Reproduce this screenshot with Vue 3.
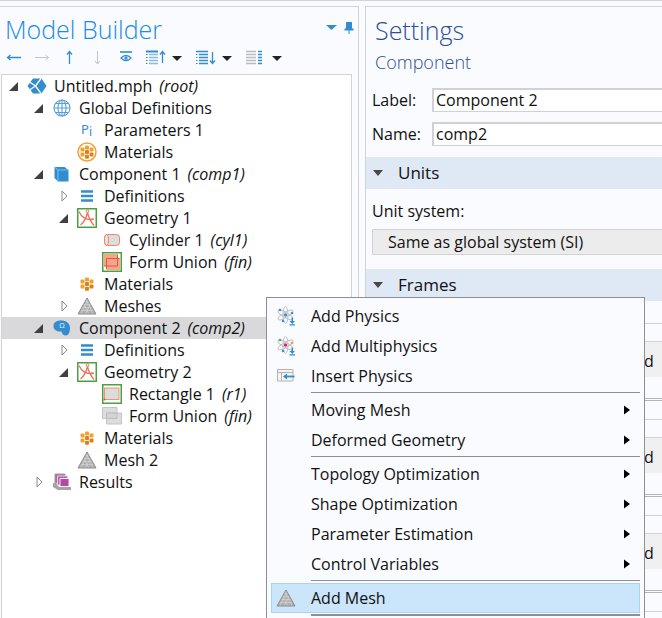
<script setup>
import { ref } from 'vue'

const tree = [
  { text: 'Untitled.mph', tag: 'root', depth: 0, icon: 'root', open: true },
  { text: 'Global Definitions', depth: 1, icon: 'globe', open: true },
  { text: 'Parameters 1', depth: 2, icon: 'pi' },
  { text: 'Materials', depth: 2, icon: 'materialsRing' },
  { text: 'Component 1', tag: 'comp1', depth: 1, icon: 'cube', open: true },
  { text: 'Definitions', depth: 2, icon: 'defs', open: false },
  { text: 'Geometry 1', depth: 2, icon: 'geometry', open: true },
  { text: 'Cylinder 1', tag: 'cyl1', depth: 3, icon: 'cylinder' },
  { text: 'Form Union', tag: 'fin', depth: 3, icon: 'union' },
  { text: 'Materials', depth: 2, icon: 'materials' },
  { text: 'Meshes', depth: 2, icon: 'mesh', open: false },
  { text: 'Component 2', tag: 'comp2', depth: 1, icon: 'blob', open: true, selected: true },
  { text: 'Definitions', depth: 2, icon: 'defs', open: false },
  { text: 'Geometry 2', depth: 2, icon: 'geometry', open: true },
  { text: 'Rectangle 1', tag: 'r1', depth: 3, icon: 'rectangle' },
  { text: 'Form Union', tag: 'fin', depth: 3, icon: 'unionGrey' },
  { text: 'Materials', depth: 2, icon: 'materials' },
  { text: 'Mesh 2', depth: 2, icon: 'mesh' },
  { text: 'Results', depth: 1, icon: 'results', open: false },
]

const menu = [
  [
    { text: 'Add Physics', icon: 'physics' },
    { text: 'Add Multiphysics', icon: 'multiphysics' },
    { text: 'Insert Physics', icon: 'insert' },
  ],
  [
    { text: 'Moving Mesh', sub: true },
    { text: 'Deformed Geometry', sub: true },
  ],
  [
    { text: 'Topology Optimization', sub: true },
    { text: 'Shape Optimization', sub: true },
    { text: 'Parameter Estimation', sub: true },
    { text: 'Control Variables', sub: true },
  ],
  [{ text: 'Add Mesh', icon: 'mesh', active: true }],
]

const atom = (core, a, b) => `
  <g fill="none" stroke="#c2c2c4"><ellipse cx="9.500" cy="9" rx="2.500" ry="8.500"/><ellipse cx="9.500" cy="9" rx="2.500" ry="8.500" transform="rotate(60 9.500 9)"/><ellipse cx="9.500" cy="9" rx="2.500" ry="8.500" transform="rotate(120 9.500 9)"/></g>
  <circle cx="9.500" cy="9" r="1.700" fill="${core}"/><circle cx="4" cy="4" r="1.300" fill="${a}"/><circle cx="16" cy="7" r="1.300" fill="${b}"/><circle cx="7" cy="15" r="1.300" fill="#3a92d2"/>
  <path d="M15.500 11.500h1.500v3.500h2l-2.750 3-2.750-3h2zM13.500 18.300h5.500v1.200h-5.500z" fill="#2f8dd0"/>`

const cells = `
  <g fill="#f0a030"><rect x="8" y="3.500" width="4" height="4" rx="1"/><rect x="3.500" y="5.500" width="4" height="4" rx="1"/><rect x="12.500" y="5.500" width="4" height="4" rx="1"/><rect x="3.500" y="10.500" width="4" height="4" rx="1"/></g>
  <g fill="#d98218"><rect x="8" y="8" width="4" height="4" rx="1"/><rect x="12.500" y="10.500" width="4" height="4" rx="1"/><rect x="8" y="12.700" width="4" height="4" rx="1"/></g>`

const icons = {
  root: '<path d="M0.500 10L6 2.500h8.500l5 7.500-5 7.500H6z" fill="#338ccc"/><path d="M2.500 6l6 4-6 4M8.500 10l5.500-7.500M8.500 10l5.500 7.500" stroke="#fafbff" stroke-width="1.300" fill="none"/>',
  globe: '<g fill="none" stroke="#5aa0d8" stroke-width="1.100"><circle cx="10" cy="10" r="8"/><ellipse cx="10" cy="10" rx="4" ry="8"/><path d="M10 2v16M2 10h16M3.500 5.500h13M3.500 14.500h13"/></g>',
  pi: '<text x="4" y="14" font-family="Noto Sans, sans-serif" font-size="13" fill="#338ccc">P</text><text x="12" y="15.500" font-family="Noto Sans, sans-serif" font-size="12" fill="#338ccc">i</text>',
  materialsRing: '<circle cx="10" cy="10" r="9" fill="#fff" stroke="#efa23c" stroke-width="1.500"/>' + cells,
  materials: cells,
  cube: '<path d="M2.500 3h10l4 3v11.500H6L2.500 14z" fill="#2f8dd0"/><path d="M2.500 3L6 6h10.500M6 6v11.500" fill="none" stroke="#8cc4ea" stroke-width="0.900"/>',
  defs: '<path d="M4 5.500h12M4 10h12M4 14.500h12" stroke="#338ccc" stroke-width="2.600"/>',
  geometry: '<rect x="0.750" y="0.750" width="18.500" height="18.500" fill="#fff" stroke="#48a23f" stroke-width="1.500"/><path d="M10.500 4.500C9.500 9 7 14 3.500 17M10.500 4.500c1 4.500 3 9 6.500 13M2 3.500c2 5 7 9.500 15 7.500" fill="none" stroke="#ec7357" stroke-width="1.300"/><circle cx="10.500" cy="3.200" r="1.300" fill="#fff" stroke="#ec7357"/>',
  cylinder: '<rect x="2.500" y="4.500" width="15" height="11" rx="3" fill="#dcdcdc" stroke="#ee8468"/><ellipse cx="4.500" cy="10" rx="2" ry="5.500" fill="#e8e8e8" stroke="#ee8468"/>',
  union: '<rect x="0.750" y="0.750" width="18.500" height="18.500" fill="#fff" stroke="#48a23f" stroke-width="1.500"/><path d="M1.500 2h14v4h2.500v12H4.500v-4h-3z" fill="#f5a58c"/><path d="M2 14h13.500V2.500M4.500 17V6.500h13" fill="none" stroke="#e0573a"/>',
  unionGrey: '<path d="M0.500 1.500h14.500v11H0.500z" fill="#dcdcdc" stroke="#c4c4c4"/><path d="M4.500 7h15v11h-15z" fill="#dcdcdc" stroke="#c4c4c4"/><path d="M4.500 7H15v5.500H4.500z" fill="#d2d2d2" stroke="#bdbdbd"/>',
  rectangle: '<rect x="0.750" y="0.750" width="18.500" height="18.500" fill="#fff" stroke="#48a23f" stroke-width="1.500"/><rect x="2.500" y="4" width="14.500" height="11.500" fill="#dcdcdc" stroke="#f0927a"/><circle cx="2.500" cy="15.500" r="1" fill="#e0573a"/>',
  mesh: '<path d="M10 2L19 18H1z" fill="#b0b0b0" stroke="#8c8c8c"/><path d="M8.500 5.500h3M7 8.500h6M5.500 11.500h9M4 14.500h12M10 3.500v2l-1.500 3-1.500 3-1.500 3-1.500 3M10 5.500l1.500 3 1.500 3 1.500 3 1.500 3M7 8.500l3 6 1.500 3M13 8.500l-3 6-1.500 3" fill="none" stroke="#d6d6d6" stroke-width="0.600"/>',
  blob: '<path d="M1.500 8c0-4 3.500-5.500 7.500-5.500 5 0 9 2.500 9 7.500 0 4-1.500 7.500-4 7.500s-4-1.500-4.500-4C6 14 1.500 12.500 1.500 8z" fill="#338ccc"/><text x="7.500" y="10" font-family="Noto Sans, sans-serif" font-size="7" fill="#e6f2fb">Ω</text>',
  results: '<path d="M1 11h3l3 4h12v3H6l-5-3z" fill="#a4a4a4"/><path d="M3 2h10v9H3z" fill="#b85cab" stroke="#a0a0a0"/><path d="M5.500 4h10v9h-10z" fill="#b85cab" stroke="#e6d4e4"/><path d="M8 6.500h9v8H8z" fill="#b14aa2" stroke="#eee"/>',
  physics: atom('#3a92d2', '#3a92d2', '#3a92d2'),
  multiphysics: atom('#d8207c', '#4caf50', '#f0a030'),
  insert: '<path d="M1.500 3.500H17v11.500H1.500zM1.500 6.500H17M5.500 6.500v8.500" fill="#f4f4f4" stroke="#b4b4b4"/><path d="M18.500 10.500H10" stroke="#2f8dd0" stroke-width="1.800"/><path d="M7 10.500l4-3v6z" fill="#2f8dd0"/>',
}

const label = ref('Component 2')
const name = ref('comp2')
const system = ref('si')
</script>

<template>
  <main class="app">
    <section class="builder">
      <header class="title-bar">
        <h1>Model Builder</h1>
        <button class="tool" aria-label="Panel menu"><svg width="11" height="16"><path d="M0 5h11l-5.500 5z" fill="#338ccc" /></svg></button>
        <button class="tool" aria-label="Pin panel"><svg width="10" height="16"><path d="M2 2h6v6l1.500 1v1.500h-9V9L2 8zM4.500 10h1v4h-1z" fill="#338ccc" /></svg></button>
      </header>
      <nav class="toolbar">
        <button class="tool" aria-label="Back"><svg width="16" height="16"><path d="M1.500 7.500H15M4.500 5L1.500 7.500l3 2.500" fill="none" stroke="#338ccc" stroke-width="1.300" /></svg></button>
        <button class="tool" aria-label="Forward"><svg width="16" height="16"><path d="M1 7.500h13.500M11.500 5l3 2.500-3 2.500" fill="none" stroke="#c4c4c4" /></svg></button>
        <button class="tool" aria-label="Up"><svg width="16" height="16"><path d="M7.500 14V1.500M5 4.500l2.500-3 2.500 3" fill="none" stroke="#338ccc" stroke-width="1.300" /></svg></button>
        <button class="tool" aria-label="Down"><svg width="16" height="16"><path d="M7.500 1v13M5 11l2.500 3 2.500-3" fill="none" stroke="#c4c4c4" /></svg></button>
        <button class="tool" aria-label="Show"><svg width="16" height="16"><path d="M2 2h12" stroke="#338ccc" stroke-width="1.600" /><path d="M3 8q5-5 10 0q-5 5-10 0z" fill="none" stroke="#338ccc" stroke-width="1.200" /><circle cx="8" cy="8" r="1.600" fill="#338ccc" /></svg></button>
        <button class="tool wide" aria-label="Collapse all"><svg width="20" height="16"><path d="M0 1.500h12" stroke="#338ccc" stroke-width="2" /><path d="M3 4.500h9M3 7.500h9M3 10.500h9M3 13.500h9" stroke="#88bce2" stroke-width="1.400" /><path d="M0 4.500h1.500M0 7.500h1.500M0 10.500h1.500M0 13.500h1.500" stroke="#338ccc" /><path d="M16.500 13V1.500M14 4.500l2.500-3 2.500 3" fill="none" stroke="#338ccc" stroke-width="1.300" /></svg><i class="drop"></i></button>
        <button class="tool wide" aria-label="Expand all"><svg width="20" height="16"><path d="M0 1.500h12M3 4.500h9M3 7.500h9M3 10.500h9M3 13.500h9" stroke="#338ccc" stroke-width="1.600" /><path d="M0 4.500h1.500M0 7.500h1.500M0 10.500h1.500M0 13.500h1.500" stroke="#338ccc" /><path d="M16.500 2v11.500M14 10.500l2.500 3 2.500-3" fill="none" stroke="#338ccc" stroke-width="1.300" /></svg><i class="drop"></i></button>
        <button class="tool wide" aria-label="Columns"><svg width="20" height="16"><path d="M0 1.500h10M0 4.500h10M0 7.500h10M0 10.500h10M0 13.500h10" stroke="#bbb" stroke-width="1.500" /><path d="M12 1.500h4M12 4.500h4M12 7.500h4M12 10.500h4M12 13.500h4" stroke="#338ccc" stroke-width="1.500" /></svg><i class="drop"></i></button>
      </nav>
      <ul class="tree">
        <li v-for="(n, i) in tree" :key="i" :class="['depth' + n.depth, { selected: n.selected }]">
          <span class="twist">
            <svg v-if="n.open" width="9" height="9"><path d="M9 0v9H0z" fill="#404040" /></svg>
            <svg v-else-if="n.open === false" width="10" height="12"><path d="M3 1l5 5-5 5z" fill="#fff" stroke="#8c8c8c" /></svg>
          </span>
          <svg class="icon" viewBox="0 0 20 20" v-html="icons[n.icon]"></svg>
          <span>{{ n.text }}</span>
          <em v-if="n.tag">({{ n.tag }})</em>
        </li>
      </ul>
    </section>

    <section class="settings">
      <h1>Settings</h1>
      <h2>Component</h2>
      <form class="fields">
        <label for="label">Label:</label><input id="label" v-model="label" type="text" />
        <label for="name">Name:</label><input id="name" v-model="name" type="text" />
      </form>
      <h3><i class="caret"></i>Units</h3>
      <div class="units">
        <label for="system">Unit system:</label>
        <select id="system" v-model="system"><option value="si">Same as global system (SI)</option></select>
      </div>
      <h3><i class="caret"></i>Frames</h3>
      <div class="frames">
        <div v-for="k in 4" :key="k" class="frame">
          <div class="frame-head"></div>
          <template v-if="k < 4">
            <div class="frame-gap"></div>
            <div class="frame-cell">d</div>
          </template>
        </div>
      </div>
    </section>

    <div class="menu" role="menu">
      <div v-for="(group, g) in menu" :key="g" class="group">
        <button v-for="m in group" :key="m.text" role="menuitem" :class="['item', { active: m.active }]">
          <svg v-if="m.icon" class="icon" viewBox="0 0 20 20" v-html="icons[m.icon]"></svg>
          <span class="caption">{{ m.text }}</span>
          <svg v-if="m.sub" width="6" height="10"><path d="M0 0.500l6 4.500-6 4.500z" fill="#000" /></svg>
        </button>
      </div>
    </div>
  </main>
</template>

<style>
body {
  background: #fafbff;
  overflow: hidden;
}
</style>

<style scoped>
* {
  box-sizing: border-box;
}
.app {
  position: relative;
  display: grid;
  grid-template-columns: 359px minmax(0, 1fr);
  column-gap: 6px;
  height: 100vh;
  padding-top: 5px;
  overflow: hidden;
  border-top: 1px solid #d2d3d8;
  background: #fafbff;
  color: #111;
  font: 16px/22px "Open Sans", "Noto Sans", sans-serif;
}
.builder {
  display: flex;
  flex-direction: column;
  min-height: 0;
  padding-right: 6px;
  border: solid #d2d3d8;
  border-width: 1px 1px 0 0;
}
h1,
h2 {
  margin: 0;
  font-weight: 300;
}
h1 {
  font-size: 25px;
  line-height: 32px;
}
.title-bar {
  display: flex;
  align-items: center;
  gap: 7px;
  height: 41px;
  margin-right: -2px;
  padding-left: 5px;
}
.title-bar h1 {
  flex: 1;
  padding-top: 3px;
  color: #1c8ce8;
}
.tool {
  display: flex;
  align-items: center;
  padding: 0;
  border: 0;
  background: none;
}
.toolbar {
  display: flex;
  align-items: center;
  gap: 12px;
  height: 26px;
  padding: 0 0 6px 6px;
}
.wide {
  gap: 6px;
  margin-right: 2px;
}
.drop {
  border: 5px solid transparent;
  border-top-color: #222;
  border-bottom: 0;
}
.tree {
  flex: 1;
  margin: 0 0 0 1px;
  padding: 0;
  list-style: none;
  border: 1px solid #d2d3d8;
  background: #fff;
}
.tree li {
  display: flex;
  align-items: center;
  height: 22px;
  padding-left: 7px;
  white-space: nowrap;
}
.tree li.depth1 {
  padding-left: 32px;
}
.tree li.depth2 {
  padding-left: 57px;
}
.tree li.depth3 {
  padding-left: 82px;
}
.tree li.selected {
  background: #d9d9dc;
}
.twist {
  display: flex;
  width: 18px;
}
.icon {
  flex: none;
  width: 20px;
  height: 20px;
  margin-right: 7px;
}
em {
  margin-left: 7px;
}
.settings {
  min-width: 0;
  border: solid #d2d3d8;
  border-width: 1px 0 0 1px;
}
.settings h1,
.settings h2 {
  padding-left: 9px;
  color: #2a4f96;
}
.settings h1 {
  padding-top: 7px;
}
.settings h2 {
  font-size: 18px;
  line-height: 32px;
}
.fields {
  display: grid;
  grid-template-columns: 54px 1fr;
  gap: 10px 6px;
  align-items: center;
  padding: 10px 0 11px 6px;
}
.fields input {
  width: 100%;
  height: 24px;
  padding: 0 2px 2px;
  border: solid #d0d1d6;
  border-width: 2px 0 1px 2px;
  background: #fff;
  color: inherit;
  font: inherit;
  line-height: 19px;
}
h3 {
  display: flex;
  align-items: center;
  gap: 15px;
  height: 32px;
  margin: 0;
  padding-left: 7px;
  background: #dfe8f5;
  font-size: 17px;
  font-weight: 400;
}
.caret {
  border: 5px solid transparent;
  border-top: 6px solid #484848;
  border-bottom: 0;
}
.units {
  padding: 11px 0 14px 6px;
}
.units label {
  display: block;
  height: 29px;
}
.units select {
  width: 100%;
  height: 26px;
  padding: 0 15px;
  border: 1px solid #d2d2d4;
  border-right: 0;
  border-radius: 2px 0 0 2px;
  background: #ececec;
  color: inherit;
  font: inherit;
  appearance: none;
}
.frames {
  padding-top: 1px;
}
.frame {
  height: 96px;
  border-top: 3px double #b4b5ba;
}
.frame:first-child {
  border-color: transparent;
}
.frame-head {
  height: 19px;
  border-bottom: 1px solid #d2d3d8;
}
.frame-gap {
  height: 18px;
  border-bottom: 1px solid #d2d3d8;
}
.frame-cell {
  height: 35px;
  padding: 8px 0 0 278px;
  background: #f0f0f0;
}
.menu {
  position: absolute;
  top: 296px;
  left: 266px;
  width: 379px;
  padding: 3px 4px;
  border: 1px solid #8e8f94;
  background: #fafbff;
}
.group + .group::before,
.group:last-child::after {
  content: "";
  display: block;
  margin: 1px 0 2px 40px;
  border-top: 1px solid #8e8f94;
}
.group:last-child::after {
  border-top-width: 2px;
}
.item {
  display: flex;
  align-items: center;
  width: 100%;
  height: 30px;
  padding: 0 9px 0 4px;
  border: 1px solid transparent;
  background: none;
  color: inherit;
  font: inherit;
  text-align: left;
}
.item.active {
  border-color: #a6d3fa;
  background: #cbe5fb;
}
.caption {
  flex: 1;
}
.item .caption:first-child {
  padding-left: 35px;
}
.item .icon {
  margin-right: 15px;
}
</style>
